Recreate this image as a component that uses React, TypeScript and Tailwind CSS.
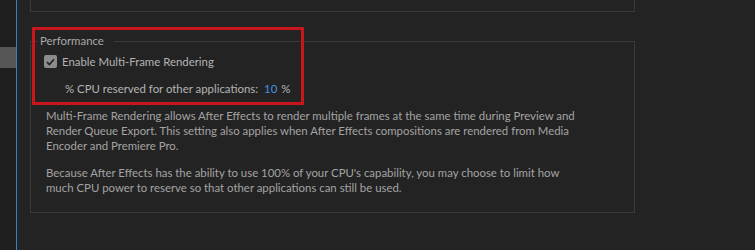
import React from 'react';

export default function App() {
  return (
    <div className="w-[755px] h-[250px] flex overflow-hidden bg-[#232323] font-['Lato',sans-serif] text-[11.4px] relative">
      {/* Left rail */}
      <div className="w-[16px] bg-[#1e1e1e] flex flex-col">
        <div className="mt-[47px] h-[21px] bg-[#565656]" />
      </div>
      <div className="w-px bg-[#3d7fc6]" />

      {/* Panel */}
      <div className="flex-1 pl-[13px]">
        <div className="w-[605px] h-[12px] border-x border-b border-[#3a3a3a]" />

        <fieldset className="w-[605px] h-[179px] mt-[22px] border border-[#3a3a3a] px-[13px]">
          <legend className="ml-[-6px] pl-[2px] pr-[10px] text-[#a9a9a9] leading-[14px]">Performance</legend>

          <div className="flex items-center mt-[7px] h-[13px]">
            <div className="w-[13px] h-[13px] rounded-[2px] bg-[#8c8c8c] flex items-center justify-center">
              <svg width="9" height="8" viewBox="0 0 9 8" fill="none">
                <path d="M1 4.2 L3.4 6.5 L8 1.3" stroke="#222" strokeWidth="1.7" />
              </svg>
            </div>
            <span className="ml-[5px] text-[#b4b4b4]">Enable Multi-Frame Rendering</span>
          </div>

          <div className="flex items-center mt-[12px] ml-[21px] text-[#b4b4b4]">
            <span>% CPU reserved for other applications:</span>
            <span className="ml-[6px] text-[#4a90e2]">10</span>
            <span className="ml-[4px]">%</span>
          </div>

          <div className="ml-[2px] mt-[11px] text-[#a3a3a3] leading-[15px]">
            <p>
              <span className="block whitespace-nowrap">Multi-Frame Rendering allows After Effects to render multiple frames at the same time during Preview and</span>
              <span className="block whitespace-nowrap">Render Queue Export. This setting also applies when After Effects compositions are rendered from Media</span>
              <span className="block whitespace-nowrap">Encoder and Premiere Pro.</span>
            </p>
            <p className="mt-[12px]">
              <span className="block whitespace-nowrap">Because After Effects has the ability to use 100% of your CPU's capability, you may choose to limit how</span>
              <span className="block whitespace-nowrap">much CPU power to reserve so that other applications can still be used.</span>
            </p>
          </div>
        </fieldset>
      </div>

      {/* Annotation highlight */}
      <div className="absolute left-[32px] top-[27px] w-[272px] h-[78px] border-[3px] border-[#c8161d]" />
    </div>
  );
}
